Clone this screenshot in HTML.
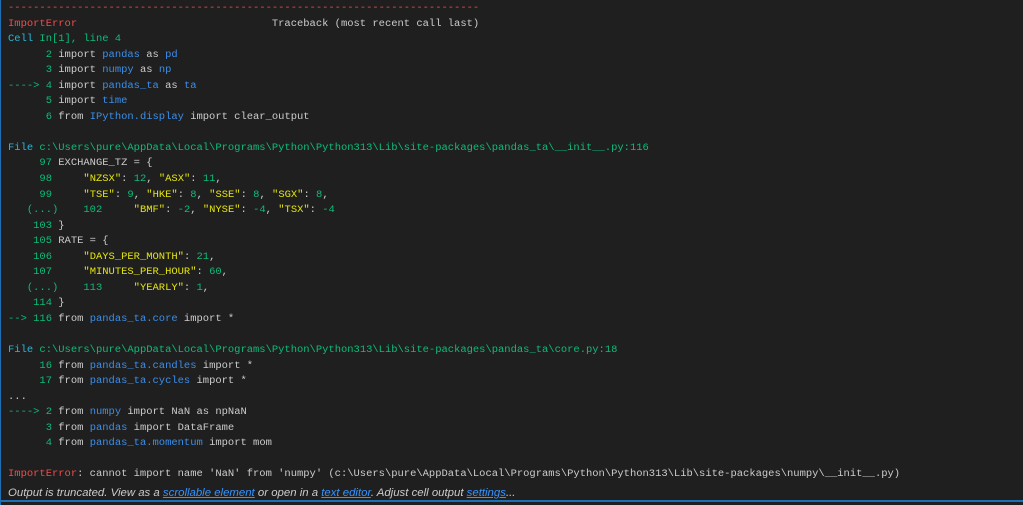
<!DOCTYPE html>
<html><head><meta charset="utf-8"><style>
html,body{margin:0;padding:0;background:#1f1f1f;width:1023px;height:505px;overflow:hidden}
.wrap{position:absolute;left:0;top:0;width:1023px;height:505px;background:#1f1f1f;border-left:1px solid #1f6fb5;box-sizing:border-box}
pre{position:absolute;left:7px;top:1px;margin:0;font-family:"Liberation Mono",monospace;font-size:10.48px;line-height:15.55px;color:#cccccc;white-space:pre}
.r{color:#f14c4c}.g{color:#23d18b}.c{color:#29b8db}.b{color:#3b8eea}.y{color:#e5e510}
.n{color:#0dbc79}
.foot{position:absolute;left:7px;top:487px;font-family:"Liberation Sans",sans-serif;font-style:italic;font-size:11.4px;color:#cccccc;letter-spacing:0}
.foot a{color:#3794ff;text-decoration:underline}
.bl{position:absolute;left:0;top:500px;width:1023px;height:2px;background:#1f6fb5}
</style></head><body><div class="wrap">
<pre><span class="r">---------------------------------------------------------------------------</span>
<span class="r">ImportError</span>                               Traceback (most recent call last)
<span class="c">Cell </span><span class="n">In[1], line 4</span>
<span class="n">      2</span> import <span class="b">pandas</span> as <span class="b">pd</span>
<span class="n">      3</span> import <span class="b">numpy</span> as <span class="b">np</span>
<span class="n">----&gt; 4</span> import <span class="b">pandas_ta</span> as <span class="b">ta</span>
<span class="n">      5</span> import <span class="b">time</span>
<span class="n">      6</span> from <span class="b">IPython.display</span> import clear_output

<span class="c">File </span><span class="n">c:\Users\pure\AppData\Local\Programs\Python\Python313\Lib\site-packages\pandas_ta\__init__.py:116</span>
<span class="n">     97</span> EXCHANGE_TZ = {
<span class="n">     98</span>     <span class="y">"NZSX"</span>: <span class="n">12</span>, <span class="y">"ASX"</span>: <span class="n">11</span>,
<span class="n">     99</span>     <span class="y">"TSE"</span>: <span class="n">9</span>, <span class="y">"HKE"</span>: <span class="n">8</span>, <span class="y">"SSE"</span>: <span class="n">8</span>, <span class="y">"SGX"</span>: <span class="n">8</span>,
<span class="n">   (...)    102</span>     <span class="y">"BMF"</span>: <span class="n">-2</span>, <span class="y">"NYSE"</span>: <span class="n">-4</span>, <span class="y">"TSX"</span>: <span class="n">-4</span>
<span class="n">    103</span> }
<span class="n">    105</span> RATE = {
<span class="n">    106</span>     <span class="y">"DAYS_PER_MONTH"</span>: <span class="n">21</span>,
<span class="n">    107</span>     <span class="y">"MINUTES_PER_HOUR"</span>: <span class="n">60</span>,
<span class="n">   (...)    113</span>     <span class="y">"YEARLY"</span>: <span class="n">1</span>,
<span class="n">    114</span> }
<span class="n">--&gt; 116</span> from <span class="b">pandas_ta.core</span> import *

<span class="c">File </span><span class="n">c:\Users\pure\AppData\Local\Programs\Python\Python313\Lib\site-packages\pandas_ta\core.py:18</span>
<span class="n">     16</span> from <span class="b">pandas_ta.candles</span> import *
<span class="n">     17</span> from <span class="b">pandas_ta.cycles</span> import *
...
<span class="n">----&gt; 2</span> from <span class="b">numpy</span> import NaN as npNaN
<span class="n">      3</span> from <span class="b">pandas</span> import DataFrame
<span class="n">      4</span> from <span class="b">pandas_ta.momentum</span> import mom

<span class="r">ImportError</span>: cannot import name 'NaN' from 'numpy' (c:\Users\pure\AppData\Local\Programs\Python\Python313\Lib\site-packages\numpy\__init__.py)</pre>
<div class="foot">Output is truncated. View as a <a>scrollable element</a> or open in a <a>text editor</a>. Adjust cell output <a>settings</a>...</div>
<div class="bl"></div>
</div></body></html>
